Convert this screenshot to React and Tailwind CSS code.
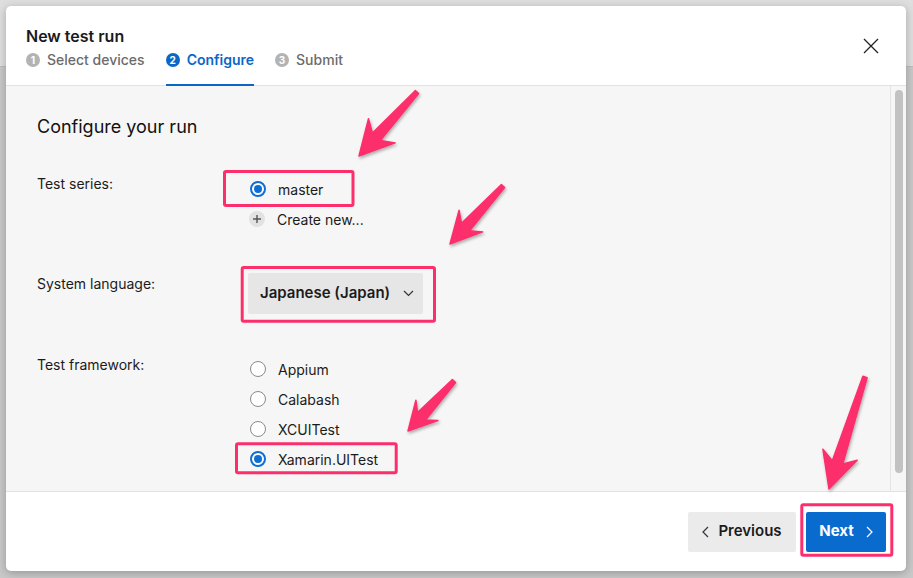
import React from 'react';

const PINK = '#fc2f6c';

// arrow polygon from tail to tip, head length h, head half width w
const arrowPoints = (tx, ty, px, py, h, w) => {
    const dx = px - tx;
    const dy = py - ty;
    const len = Math.hypot(dx, dy);
    const ux = dx / len;
    const uy = dy / len;
    const nx = -uy;
    const ny = ux;
    const at = (d, s) => `${(tx + ux * d + nx * s).toFixed(1)},${(ty + uy * d + ny * s).toFixed(1)}`;
    return [
        at(0, 2.2),
        at(len - h + 8, 5.5),
        at(len - h, w),
        at(len, 0),
        at(len - h, -w),
        at(len - h + 8, -5.5),
        at(0, -2.2),
    ].join(' ');
};

const arrows = [
    { t: [417, 92], p: [359, 156], h: 34, w: 18 },
    { t: [503, 186], p: [450, 244], h: 31, w: 16 },
    { t: [454, 381], p: [408, 431], h: 28, w: 15 },
    { t: [865, 377], p: [829, 489], h: 36, w: 18 },
];

const boxes = [
    { x: 224.5, y: 171.5, w: 128.5, h: 34 },
    { x: 242.2, y: 267.5, w: 192.3, h: 53.7 },
    { x: 236.5, y: 443.8, w: 159.7, h: 29 },
    { x: 801.8, y: 504.8, w: 90, h: 50.4 },
];

const Radio = ({ checked }) => (
    checked ? (
        <span className="w-4 h-4 rounded-full border-2 border-[#0d6ed3] bg-white flex items-center justify-center shrink-0">
            <span className="w-2 h-2 rounded-full bg-[#0d6ed3]" />
        </span>
    ) : (
        <span className="w-4 h-4 rounded-full border border-[#8a8a8a] bg-white shrink-0" />
    )
);

const RadioItem = ({ label, checked }) => (
    <div className="h-[30px] flex items-center gap-3 ml-[2px]">
        <Radio checked={checked} />
        <span className="text-[14px] text-[#1b1b1b]">{label}</span>
    </div>
);

const Step = ({ n, label, active }) => (
    <div className={`flex items-start gap-[7px] pb-[14px] border-b-2 ${active ? 'border-[#0b67c6]' : 'border-transparent'}`}>
        <span className={`mt-[3px] w-[14px] h-[14px] rounded-full text-white text-[10px] font-bold flex items-center justify-center ${active ? 'bg-[#0b67c6]' : 'bg-[#b3b3b3]'}`}>{n}</span>
        <span className={`text-[14px] leading-5 ${active ? 'text-[#0b67c6] font-semibold' : 'text-[#6b6b6b] font-medium'}`}>{label}</span>
    </div>
);

export default function App() {
    return (
        <div className="relative w-[913px] h-[578px] overflow-hidden bg-[#c8c8c8] font-['Inter',sans-serif]">
            <div className="h-[67px] bg-[#dedede] border-b border-[#bdbdbd]" />

            <div className="absolute left-[6px] top-[6px] w-[900px] h-[565px] bg-white rounded-[5px] shadow-[0_2px_8px_rgba(0,0,0,0.25)] flex flex-col overflow-hidden">
                <div className="h-[80px] shrink-0 flex items-center justify-between pl-[20px] pr-[27px] border-b border-[#e2e2e2]">
                    <div className="self-end">
                        <h1 className="text-[16px] leading-5 font-semibold text-[#1a1a1a]">New test run</h1>
                        <div className="flex gap-[21px] mt-[4px] -mb-px">
                            <Step n="1" label="Select devices" />
                            <Step n="2" label="Configure" active />
                            <Step n="3" label="Submit" />
                        </div>
                    </div>
                    <svg width="16" height="16" viewBox="0 0 16 16" className="mt-[1px]">
                        <path d="M1 1 L15 15 M15 1 L1 15" stroke="#222" strokeWidth="1.3" />
                    </svg>
                </div>

                <div className="flex-1 flex bg-[#f6f6f6] min-h-0">
                    <div className="flex-1 pl-[31px] pt-[29px]">
                        <h2 className="text-[18px] leading-6 text-[#111]">Configure your run</h2>

                        <div className="flex mt-[35px]">
                            <div className="w-[211px] text-[14px] leading-5 text-[#1b1b1b]">Test series:</div>
                            <div>
                                <RadioItem label="master" checked />
                                <div className="h-[30px] flex items-center gap-[12px] ml-[1px]">
                                    <span className="w-[16px] h-[16px] rounded-full bg-[#e2e2e2] flex items-center justify-center">
                                        <svg width="8" height="8" viewBox="0 0 8 8">
                                            <path d="M4 0 V8 M0 4 H8" stroke="#555" strokeWidth="1.4" />
                                        </svg>
                                    </span>
                                    <span className="text-[14px] text-[#1b1b1b]">Create new...</span>
                                </div>
                            </div>
                        </div>

                        <div className="flex mt-[39px]">
                            <div className="w-[211px] text-[14px] leading-[22px] text-[#1b1b1b]">System language:</div>
                            <div className="w-[175px] h-[41px] bg-[#e6e6e6] rounded-[2px] flex items-center pl-[12px] gap-[13px]">
                                <span className="text-[15px] font-semibold text-[#1b1b1b]">Japanese (Japan)</span>
                                <svg width="11" height="7" viewBox="0 0 11 7">
                                    <path d="M1 1 L5.5 5.5 L10 1" fill="none" stroke="#333" strokeWidth="1.2" />
                                </svg>
                            </div>
                        </div>

                        <div className="flex mt-[40px]">
                            <div className="w-[211px] text-[14px] leading-[22px] text-[#1b1b1b]">Test framework:</div>
                            <div>
                                <RadioItem label="Appium" />
                                <RadioItem label="Calabash" />
                                <RadioItem label="XCUITest" />
                                <RadioItem label="Xamarin.UITest" checked />
                            </div>
                        </div>
                    </div>
                    <div className="w-[16px] border-l border-[#e4e4e4] pt-[4px] pb-[18px] flex justify-center">
                        <div className="w-[8px] h-full rounded-full bg-[#c2c2c2]" />
                    </div>
                </div>

                <div className="h-[80px] shrink-0 border-t border-[#e2e2e2] flex items-center justify-end gap-[10px] pr-[20px]">
                    <button className="w-[108px] h-[40px] bg-[#ebebeb] rounded-[2px] flex items-center justify-center gap-[9px] text-[15px] font-semibold text-[#1b1b1b]">
                        <svg width="7" height="12" viewBox="0 0 7 12">
                            <path d="M6 1 L1 6 L6 11" fill="none" stroke="#333" strokeWidth="1.2" />
                        </svg>
                        Previous
                    </button>
                    <button className="w-[80px] h-[40px] bg-[#0a6bcf] rounded-[2px] flex items-center justify-center gap-[12px] text-[15px] font-bold text-white">
                        Next
                        <svg width="7" height="12" viewBox="0 0 7 12">
                            <path d="M1 1 L6 6 L1 11" fill="none" stroke="#fff" strokeWidth="1.2" />
                        </svg>
                    </button>
                </div>
            </div>

            <svg className="absolute inset-0 pointer-events-none" width="913" height="578" viewBox="0 0 913 578">
                <defs>
                    <filter id="sh" x="-20%" y="-20%" width="140%" height="140%">
                        <feDropShadow dx="1" dy="2" stdDeviation="1.5" floodColor="#000" floodOpacity="0.3" />
                    </filter>
                </defs>
                {boxes.map((b, i) => (
                    <rect key={i} x={b.x} y={b.y} width={b.w} height={b.h} rx="1.5" fill="none" stroke={PINK} strokeWidth="3" />
                ))}
                {arrows.map((a, i) => (
                    <polygon key={i} points={arrowPoints(a.t[0], a.t[1], a.p[0], a.p[1], a.h, a.w)} fill={PINK} stroke={PINK} strokeWidth="1.5" strokeLinejoin="round" filter="url(#sh)" />
                ))}
            </svg>
        </div>
    );
}
